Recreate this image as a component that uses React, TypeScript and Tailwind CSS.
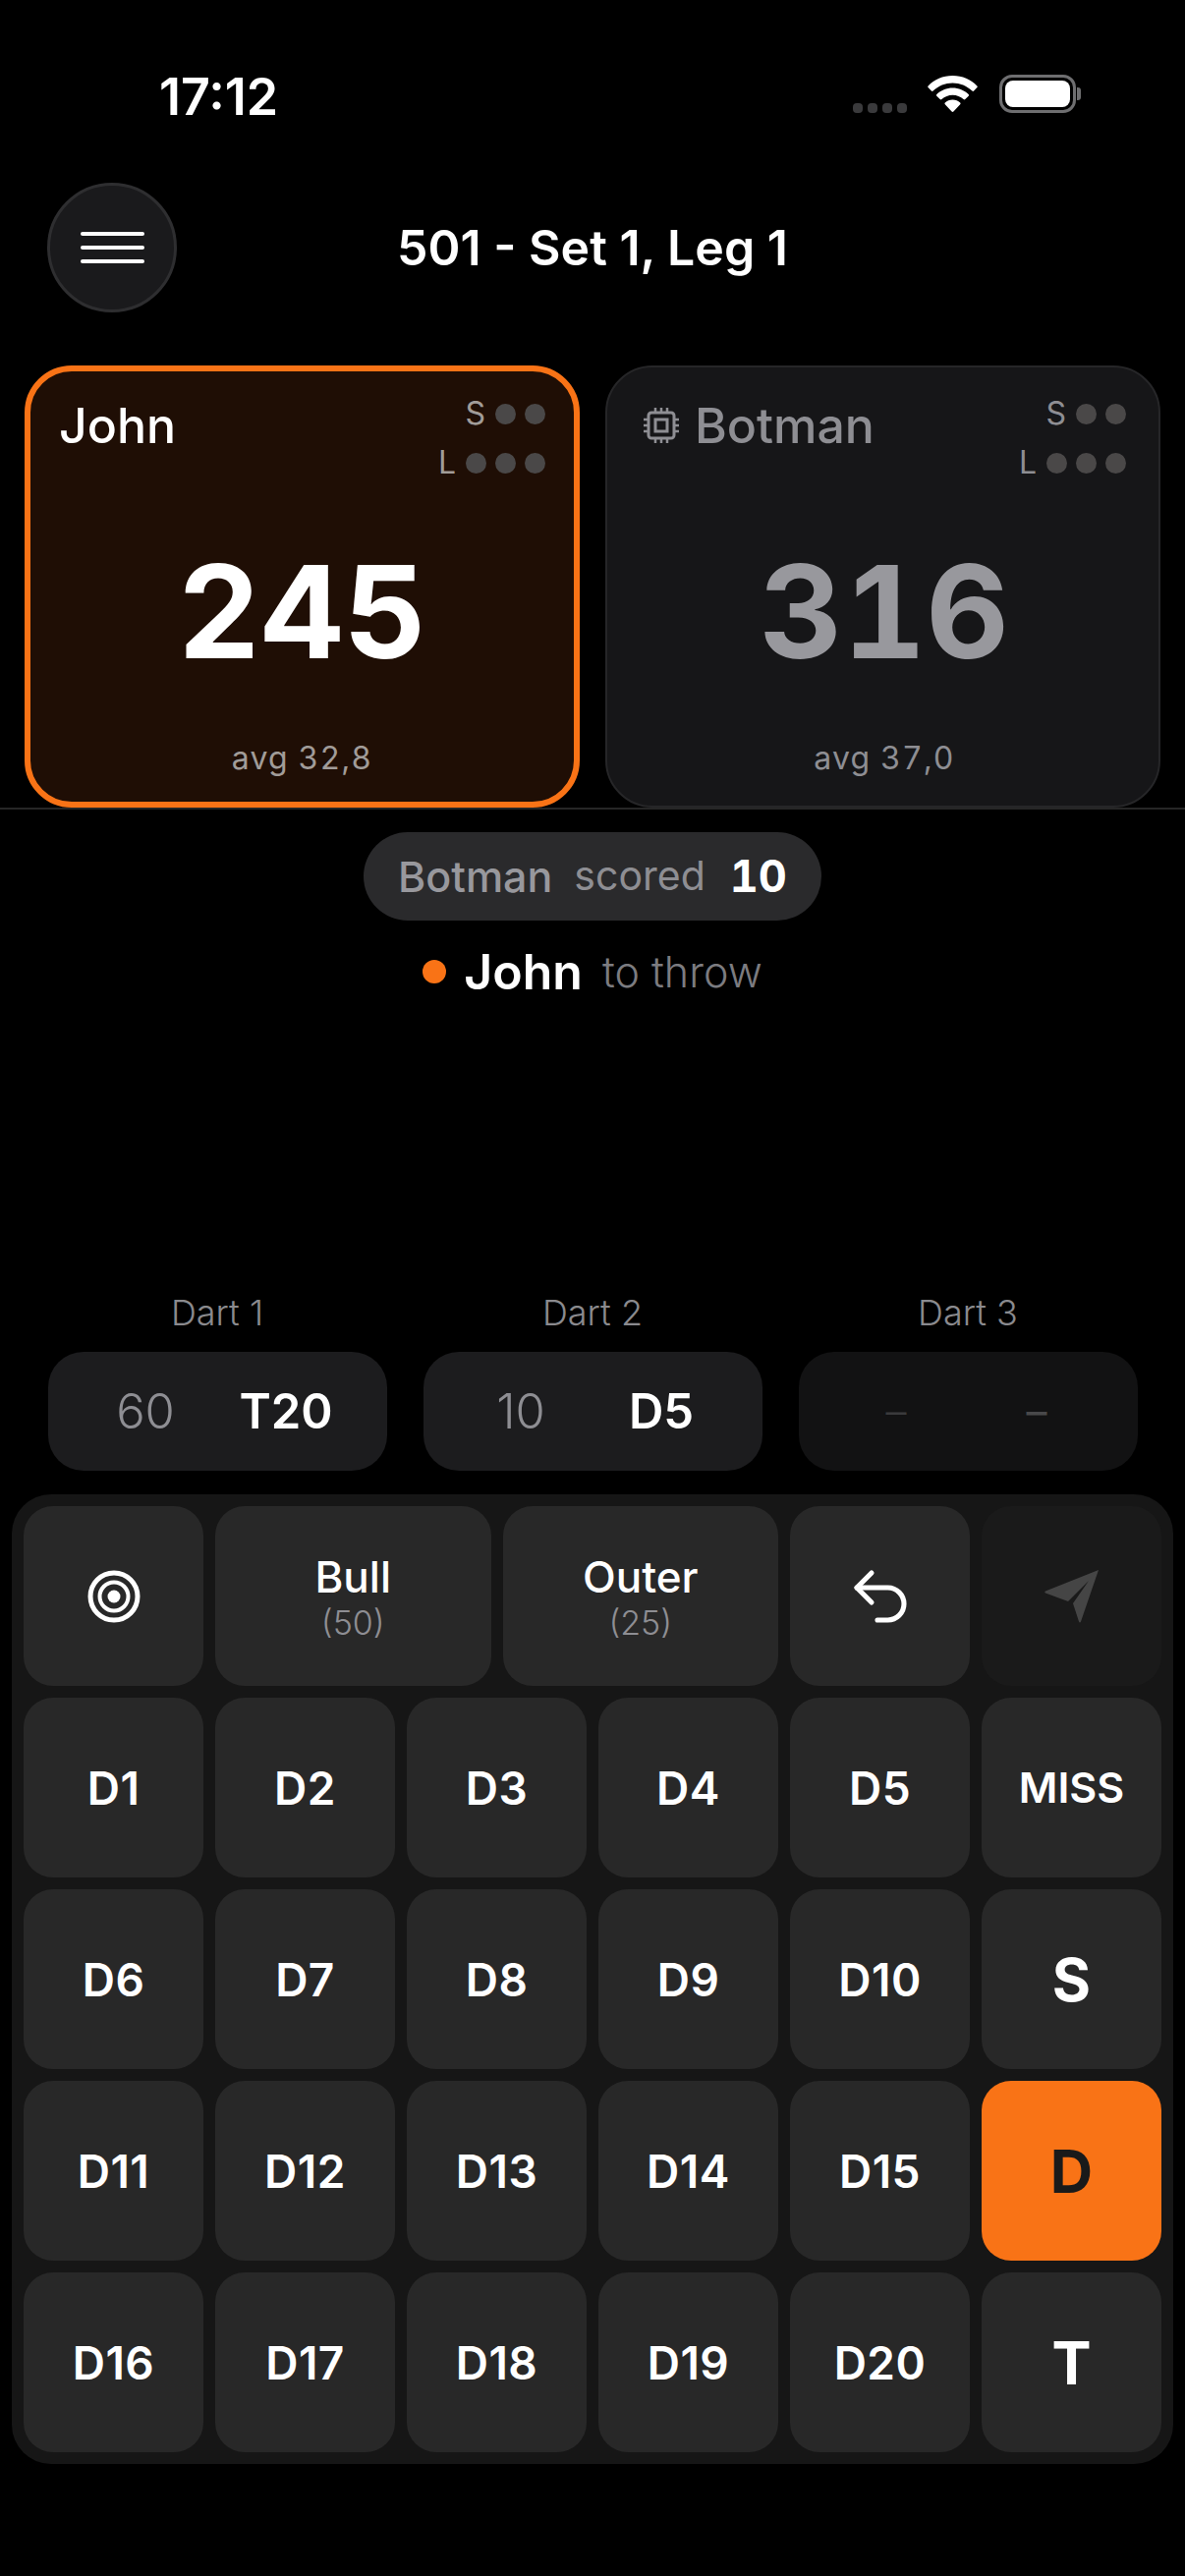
import React from "react";
import { Undo2 } from "lucide-react";

function Dots({ label, count, labelClass }: { label: string; count: number; labelClass: string }) {
  return (
    <div className="flex items-center gap-[9px] h-[30px]">
      <span className={`text-[32px] leading-none font-normal mr-[1px] ${labelClass}`}>{label}</span>
      {Array.from({ length: count }).map((_, i) => (
        <span key={i} className="w-[21px] h-[21px] rounded-full bg-[#4a4848]" />
      ))}
    </div>
  );
}

function Chip() {
  return (
    <svg width="38" height="38" viewBox="0 0 38 38" fill="none" stroke="#8e8e93" strokeWidth="3" className="mr-[15px]">
      <rect x="6" y="6" width="26" height="26" rx="3" />
      <rect x="13" y="13" width="12" height="12" />
      <path d="M13 1v5M19 1v5M25 1v5M13 32v5M19 32v5M25 32v5M1 13h5M1 19h5M1 25h5M32 13h5M32 19h5M32 25h5" strokeWidth="2.5" />
    </svg>
  );
}

function PlayerCard({ active, name, score, avg }: { active: boolean; name: string; score: string; avg: string }) {
  return (
    <div
      className={
        active
          ? "w-[565px] h-[450px] rounded-[48px] border-[6px] border-[#f97316] bg-[#1f0e05] flex flex-col pt-[28px] pl-[29px] pr-[29px]"
          : "w-[565px] h-[450px] rounded-[48px] border-[2px] border-[#262628] bg-[#161618] flex flex-col pt-[32px] pl-[36px] pr-[33px]"
      }
    >
      <div className="flex justify-between items-start h-[100px]">
        <div className="flex items-center h-[54px]">
          {!active && <Chip />}
          <span className={active ? "text-[50px] leading-none font-medium text-white" : "text-[50px] leading-none font-[550] text-[#8e8e93]"}>{name}</span>
        </div>
        <div className="flex flex-col items-end gap-[20px] pt-0">
          <Dots label="S" count={2} labelClass={active ? "text-[#a19c99]" : "text-[#8e8e93]"} />
          <Dots label="L" count={3} labelClass={active ? "text-[#a19c99]" : "text-[#8e8e93]"} />
        </div>
      </div>
      <div className={active ? "mt-[51px] text-center text-[131px] leading-none font-bold tabular-nums text-white" : "mt-[51px] text-center text-[131px] leading-none font-bold tabular-nums text-[#98989d]"}>
        {score}
      </div>
      <div className={active ? "mt-[68px] text-center text-[32px] leading-none tracking-[1.2px] tabular-nums text-[#a19c99]" : "mt-[68px] text-center text-[32px] leading-none tracking-[1.2px] tabular-nums text-[#8e8e93]"}>
        {avg}
      </div>
    </div>
  );
}

function DartBox({ label, value, code, tone }: { label: string; value: string; code: string; tone: "on" | "off" }) {
  return (
    <div className="w-[345px] flex flex-col items-center">
      <div className="h-[40px] leading-[40px] text-[36px] text-[#8a8a8e] font-light">{label}</div>
      <div
        className={
          tone === "on"
            ? "mt-[20px] w-full h-[121px] rounded-[36px] bg-[#1c1c1e] grid grid-cols-2 items-center pl-[28px] pr-[31px] text-center"
            : "mt-[20px] w-full h-[121px] rounded-[36px] bg-[#121213] grid grid-cols-2 items-center pl-[28px] pr-[31px] text-center"
        }
      >
        {tone === "on" ? (
          <>
            <span className="text-[49px] font-light text-[#8e8e93]">{value}</span>
            <span className="text-[49px] font-semibold text-white">{code}</span>
          </>
        ) : (
          <>
            <span className="text-[42px] font-light text-[#3a3a3c]">{value}</span>
            <span className="text-[42px] font-normal text-[#48484a]">{code}</span>
          </>
        )}
      </div>
    </div>
  );
}

function Key({ children, className }: { children: React.ReactNode; className?: string }) {
  return (
    <div className={`h-[183px] rounded-[30px] bg-[#282828] flex flex-col items-center justify-center text-white ${className ?? ""}`}>
      {children}
    </div>
  );
}

function NumKey({ label }: { label: string }) {
  return (
    <Key className="col-span-2">
      <span className={label === "MISS" ? "text-[43px] leading-none font-semibold" : "text-[46px] leading-none font-semibold tracking-[0.5px]"}>{label}</span>
    </Key>
  );
}

const rows: string[] = [
  "D1", "D2", "D3", "D4", "D5", "MISS",
  "D6", "D7", "D8", "D9", "D10", "S",
  "D11", "D12", "D13", "D14", "D15", "D",
  "D16", "D17", "D18", "D19", "D20", "T",
];

export default function App() {
  return (
    <div className="w-[1206px] h-[2622px] bg-black text-white overflow-hidden flex flex-col [font-family:Inter,sans-serif]">
      {/* status bar */}
      <div className="h-[186px] shrink-0 flex items-start justify-between pl-[162px] pr-[106px] pt-[71px]">
        <span className="text-[52px] leading-[56px] font-semibold">17:12</span>
        <div className="flex items-center mt-[5px]">
          <div className="flex gap-[5px] mt-[28px] mr-[21px]">
            <span className="w-[10px] h-[10px] rounded-[4px] bg-[#3a3a3c]" />
            <span className="w-[10px] h-[10px] rounded-[4px] bg-[#3a3a3c]" />
            <span className="w-[10px] h-[10px] rounded-[4px] bg-[#3a3a3c]" />
            <span className="w-[10px] h-[10px] rounded-[4px] bg-[#3a3a3c]" />
          </div>
          <svg width="51" height="37" viewBox="0 0 51 37" fill="white" className="mr-[22px]">
            <path d="M25.5 0C15.5 0 7 4 0.6 10.4c-.5.5-.5 1.2 0 1.7l3.3 3.4c.5.5 1.2.5 1.7 0C11 10.3 18 7.4 25.5 7.4s14.5 2.9 19.9 8.1c.5.5 1.2.5 1.7 0l3.3-3.4c.5-.5.5-1.2 0-1.7C44 4 35.500 0 25.500 0z" />
            <path d="M25.5 12.500c-6.200 0-11.900 2.400-16.200 6.500-.5.5-.5 1.200 0 1.700l3.400 3.400c.5.5 1.200.5 1.700 0 3-2.800 6.900-4.400 11.100-4.400s8.100 1.600 11.100 4.400c.5.5 1.200.5 1.700 0l3.400-3.400c.5-.5.5-1.200 0-1.700-4.300-4.100-10-6.500-16.200-6.500z" />
            <path d="M25.5 24.500c-3 0-5.600 1.100-7.700 3-.5.5-.5 1.200 0 1.700l6.800 7.300c.5.5 1.300.5 1.800 0l6.800-7.300c.5-.5.5-1.200 0-1.700-2.100-1.900-4.700-3-7.700-3z" />
          </svg>
          <div className="flex items-center">
            <div className="w-[78px] h-[39px] rounded-[13px] border-[3px] border-[#6e6e70] p-[3px]">
              <div className="w-full h-full rounded-[8px] bg-white" />
            </div>
            <div className="w-[4px] h-[13px] rounded-r-[3px] bg-[#6e6e70] ml-[1px]" />
          </div>
        </div>
      </div>

      {/* header */}
      <div className="h-[132px] shrink-0 grid grid-cols-[1fr_auto_1fr] items-center pl-[48px]">
        <div className="w-[132px] h-[132px] rounded-full bg-[#1a1a1c] border-[3px] border-[#2e2e30] flex flex-col items-center justify-center gap-[10px]">
          <span className="w-[65px] h-[4px] rounded-full bg-white" />
          <span className="w-[65px] h-[4px] rounded-full bg-white" />
          <span className="w-[65px] h-[4px] rounded-full bg-white" />
        </div>
        <div className="text-[50px] leading-none font-semibold -ml-[48px]">501 - Set 1, Leg 1</div>
        <div />
      </div>

      {/* cards */}
      <div className="mt-[54px] shrink-0 px-[25px] flex gap-[26px] border-b-2 border-[#262626] h-[452px]">
        <PlayerCard active name="John" score="245" avg="avg 32,8" />
        <PlayerCard active={false} name="Botman" score="316" avg="avg 37,0" />
      </div>

      {/* last score */}
      <div className="mt-[23px] shrink-0 flex flex-col items-center">
        <div className="h-[90px] w-[466px] rounded-full bg-[#2a2a2c] flex items-center justify-center">
          <span className="text-[43px] font-medium text-[#98989d]">Botman</span>
          <span className="text-[41px] text-[#8e8e93] ml-[22px]">scored</span>
          <span className="text-[45px] font-bold tabular-nums text-white ml-[25px]">10</span>
        </div>
        <div className="mt-[22px] h-[60px] flex items-center">
          <span className="w-[24px] h-[24px] rounded-full bg-[#f97316] mr-[18px]" />
          <span className="text-[50px] font-semibold text-white">John</span>
          <span className="text-[43px] font-light text-[#7c7c80] ml-[20px]">to throw</span>
        </div>
      </div>

      {/* darts */}
      <div className="mt-[297px] shrink-0 flex justify-center gap-[37px]">
        <DartBox label="Dart 1" value="60" code="T20" tone="on" />
        <DartBox label="Dart 2" value="10" code="D5" tone="on" />
        <DartBox label="Dart 3" value="–" code="–" tone="off" />
      </div>

      {/* keypad */}
      <div className="mt-[24px] mx-[12px] shrink-0 rounded-[40px] bg-[#161616] p-[12px] grid grid-cols-12 gap-[12px]">
        <Key className="col-span-2">
          <svg width="54" height="54" viewBox="0 0 54 54" fill="none" stroke="white" strokeWidth="5">
            <circle cx="27" cy="27" r="24" />
            <circle cx="27" cy="27" r="14.500" strokeWidth="4" />
            <circle cx="27" cy="27" r="6.500" fill="white" stroke="none" />
          </svg>
        </Key>
        <Key className="col-span-3 pt-[3px]">
          <span className="text-[44px] leading-[48px] font-medium">Bull</span>
          <span className="text-[34px] leading-[40px] mt-[3px] font-light text-[#8e8e93]">(50)</span>
        </Key>
        <Key className="col-span-3 pt-[3px]">
          <span className="text-[44px] leading-[48px] font-medium">Outer</span>
          <span className="text-[34px] leading-[40px] mt-[3px] font-light text-[#8e8e93]">(25)</span>
        </Key>
        <Key className="col-span-2">
          <Undo2 size={72} strokeWidth={1.7} color="white" />
        </Key>
        <Key className="col-span-2 !bg-[#1a1a1a]">
          <svg width="56" height="56" viewBox="0 0 56 56" fill="#454545">
            <path d="M55 1 1 22.500q-1.500 1 0 2L24 33 45 12 29 35l6 18.500q1 2 2 0z" strokeLinejoin="round" />
          </svg>
        </Key>
        {rows.map((k) => {
          if (k === "S" || k === "T")
            return (
              <Key key={k} className="col-span-2">
                <span className="text-[60px] leading-none font-bold">{k}</span>
              </Key>
            );
          if (k === "D")
            return (
              <Key key={k} className="col-span-2 !bg-[#f97316]">
                <span className="text-[60px] leading-none font-bold text-[#1a1a1a]">{k}</span>
              </Key>
            );
          return <NumKey key={k} label={k} />;
        })}
      </div>
    </div>
  );
}
